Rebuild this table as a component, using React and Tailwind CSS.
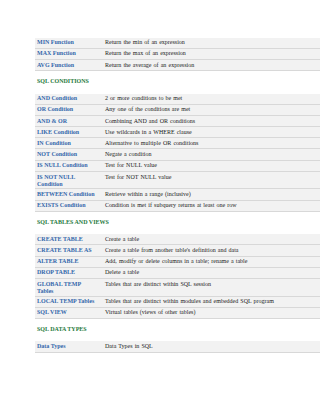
import React from "react";

const sections = [
  {
    title: null,
    rows: [
      ["MIN Function", "Return the min of an expression"],
      ["MAX Function", "Return the max of an expression"],
      ["AVG Function", "Return the average of an expression"],
    ],
  },
  {
    title: "SQL CONDITIONS",
    rows: [
      ["AND Condition", "2 or more conditions to be met"],
      ["OR Condition", "Any one of the conditions are met"],
      ["AND & OR", "Combining AND and OR conditions"],
      ["LIKE Condition", "Use wildcards in a WHERE clause"],
      ["IN Condition", "Alternative to multiple OR conditions"],
      ["NOT Condition", "Negate a condition"],
      ["IS NULL Condition", "Test for NULL value"],
      [["IS NOT NULL", "Condition"], "Test for NOT NULL value", true],
      ["BETWEEN Condition", "Retrieve within a range (inclusive)"],
      ["EXISTS Condition", "Condition is met if subquery returns at least one row"],
    ],
  },
  {
    title: "SQL TABLES AND VIEWS",
    rows: [
      ["CREATE TABLE", "Create a table"],
      ["CREATE TABLE AS", "Create a table from another table's definition and data"],
      ["ALTER TABLE", "Add, modify or delete columns in a table; rename a table"],
      ["DROP TABLE", "Delete a table"],
      [["GLOBAL TEMP", "Tables"], "Tables that are distinct within SQL session", true],
      ["LOCAL TEMP Tables", "Tables that are distinct within modules and embedded SQL program"],
      ["SQL VIEW", "Virtual tables (views of other tables)"],
    ],
  },
  {
    title: "SQL DATA TYPES",
    rows: [["Data Types", "Data Types in SQL"]],
  },
];

function Row({ name, desc, tall }) {
  return (
    <div
      className={`flex bg-[#f2f2f2] border-b border-[#d8d8d8] ${
        tall ? "h-[17.6px] items-start pt-[2px]" : "h-[11.2px] items-center"
      }`}
    >
      <div className="w-[70px] shrink-0 pl-[2px] pr-[2px] font-bold text-[#3267ab] leading-[6.8px] whitespace-nowrap">
        {Array.isArray(name) ? (
          <>
            {name[0]}
            <br />
            {name[1]}
          </>
        ) : (
          name
        )}
      </div>
      <div className="flex-1 text-[#222] leading-[6.8px] whitespace-nowrap [word-spacing:0.6px]">{desc}</div>
    </div>
  );
}

export default function App() {
  return (
    <div
      className="w-[320px] h-[414px] bg-white overflow-hidden pt-[37.6px] pl-[35px]"
      style={{ fontFamily: '"Liberation Serif", "Times New Roman", serif', fontSize: "6px" }}
    >
      {sections.map((s, i) => (
        <div key={i}>
          {s.title && (
            <div className="pl-[2px] pt-[7px] pb-[8.4px] leading-[7px] font-bold text-[#1f7a3d]">
              {s.title}
            </div>
          )}
          <div className="flex flex-col">
            {s.rows.map((r, j) => (
              <Row key={j} name={r[0]} desc={r[1]} tall={r[2]} />
            ))}
          </div>
        </div>
      ))}
    </div>
  );
}
